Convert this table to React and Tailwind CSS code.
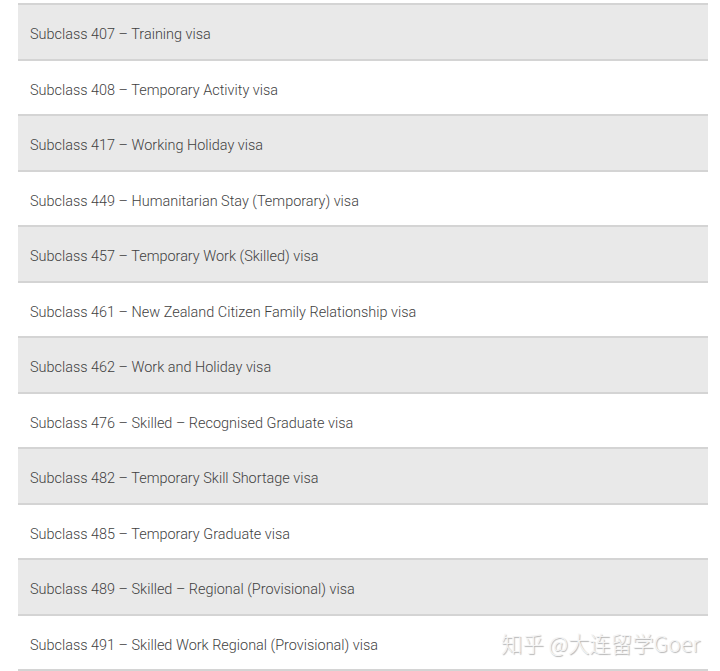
const rows = [
  "Subclass 407 – Training visa",
  "Subclass 408 – Temporary Activity visa",
  "Subclass 417 – Working Holiday visa",
  "Subclass 449 – Humanitarian Stay (Temporary) visa",
  "Subclass 457 – Temporary Work (Skilled) visa",
  "Subclass 461 – New Zealand Citizen Family Relationship visa",
  "Subclass 462 – Work and Holiday visa",
  "Subclass 476 – Skilled – Recognised Graduate visa",
  "Subclass 482 – Temporary Skill Shortage visa",
  "Subclass 485 – Temporary Graduate visa",
  "Subclass 489 – Skilled – Regional (Provisional) visa",
  "Subclass 491 – Skilled Work Regional (Provisional) visa",
];

export default function App() {
  return (
    <div className="relative w-[720px] h-[671px] overflow-hidden bg-white pt-[3px] pl-[18px] font-['Roboto',sans-serif]">
      <div className="w-[690px] border-t-2 border-[#d4d4d4]">
        {rows.map((text, i) => (
          <div
            key={text}
            className={
              "flex h-[55.5px] items-center border-b-2 border-[#d4d4d4] pl-3 pt-[7px] text-[14.45px] font-light text-[#3f3f3f] " +
              (i % 2 === 0 ? "bg-[#e9e9e9]" : "bg-white")
            }
          >
            {text}
          </div>
        ))}
      </div>
      <div className="absolute left-[501px] top-[627px] text-[21.4px] font-light text-[#f4f4f4] font-['Noto_Sans_CJK_SC',sans-serif] [text-shadow:1px_1px_1px_rgba(0,0,0,0.3)]">
        知乎 @大连留学Goer
      </div>
    </div>
  );
}
